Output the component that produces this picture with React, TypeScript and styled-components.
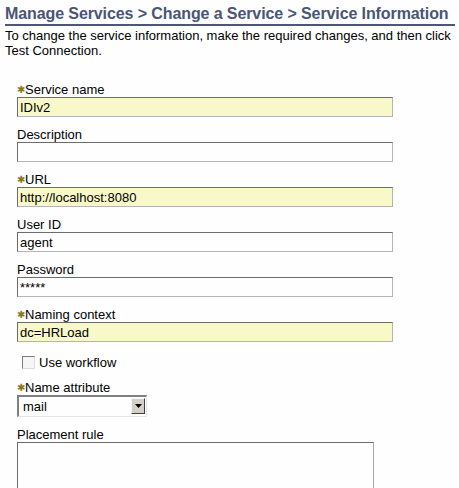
import React from "react";
import styled, { createGlobalStyle } from "styled-components";

const Global = createGlobalStyle`
  html, body { margin: 0; padding: 0; background: #fefefe; }
  body { font-family: "Liberation Sans", Arial, sans-serif; color: #000; }
`;

const Page = styled.div`
  padding: 0 4px 0 5px;
`;

const Title = styled.h1`
  margin: 0;
  padding: 4px 0 1px 0;
  font-size: 16px;
  line-height: 19px;
  font-weight: bold;
  letter-spacing: -0.1px;
  color: #4a5577;
  border-bottom: 2px solid #4b5679;
  white-space: nowrap;
`;

const Intro = styled.p`
  margin: 2px 0 0 0;
  font-size: 13px;
  line-height: 15px;
`;

const Form = styled.form`
  margin: 24px 0 0 12px;
  display: flex;
  flex-direction: column;
`;

const Label = styled.label`
  display: flex;
  align-items: center;
  height: 15px;
  font-size: 13px;
  line-height: 15px;
`;

const Req = styled.span`
  display: inline-block;
  width: 8px;
  font-family: "DejaVu Sans", sans-serif;
  font-size: 10px;
  line-height: 10px;
  color: #85791a;
  margin-top: 1px;
`;

const TextInput = styled.input<{ $required?: boolean }>`
  box-sizing: border-box;
  width: 376px;
  height: 20px;
  margin: 0 0 10px 0;
  padding: 0 2px;
  font-family: "Liberation Sans", Arial, sans-serif;
  font-size: 13px;
  color: #000;
  background: ${(p) => (p.$required ? "#f9f8c9" : "#fefefe")};
  border-style: solid;
  border-width: 1px;
  border-color: #6c6c6c #b4b4b8 #b4b4b8 #6c6c6c;
  outline: none;
`;

const CheckRow = styled.label`
  display: flex;
  align-items: center;
  gap: 4px;
  height: 15px;
  margin: 3px 0 10px 0;
  padding-left: 5px;
  font-size: 13px;
  line-height: 15px;
`;

const CheckBox = styled.input`
  appearance: none;
  box-sizing: border-box;
  width: 13px;
  height: 13px;
  margin: 0;
  background: #f6f6f6;
  border-style: solid;
  border-width: 1px;
  border-color: #7c7c7c #dcdcdc #dcdcdc #7c7c7c;
`;

const SelectWrap = styled.div`
  position: relative;
  width: 130px;
  height: 22px;
  margin-bottom: 10px;
`;

const Select = styled.select`
  appearance: none;
  box-sizing: border-box;
  width: 130px;
  height: 22px;
  margin: 0;
  padding: 0 0 0 4px;
  font-family: "Liberation Sans", Arial, sans-serif;
  font-size: 13px;
  color: #000;
  background: #fefefe;
  border-style: solid;
  border-width: 2px 1px 1px 2px;
  border-color: #808080 #e4e4e4 #e4e4e4 #808080;
  border-radius: 0;
  outline: none;
`;

const Arrow = styled.span`
  position: absolute;
  top: 3px;
  right: 2px;
  box-sizing: border-box;
  width: 14px;
  height: 16px;
  background: #d4d0c8;
  border-style: solid;
  border-width: 1px;
  border-color: #f4f4f4 #404040 #404040 #f4f4f4;
  display: flex;
  align-items: center;
  justify-content: center;
  pointer-events: none;
`;

const TextArea = styled.textarea`
  box-sizing: border-box;
  width: 357px;
  height: 70px;
  margin: 0;
  padding: 2px;
  resize: none;
  background: #fefefe;
  border-style: solid;
  border-width: 1px;
  border-color: #6c6c6c #a8a8ac #a8a8ac #6c6c6c;
  outline: none;
`;

type Field = { label: string; value: string; required?: boolean };

const fields: Field[] = [
  { label: "Service name", value: "IDIv2", required: true },
  { label: "Description", value: "" },
  { label: "URL", value: "http://localhost:8080", required: true },
  { label: "User ID", value: "agent" },
  { label: "Password", value: "*****" },
  { label: "Naming context", value: "dc=HRLoad", required: true },
];

export default function App() {
  return (
    <>
      <Global />
      <Page>
        <Title>Manage Services &gt; Change a Service &gt; Service Information</Title>
        <Intro>
          To change the service information, make the required changes, and then click Test
          Connection.
        </Intro>
        <Form onSubmit={(e) => e.preventDefault()}>
          {fields.map((f) => (
            <React.Fragment key={f.label}>
              <Label>
                {f.required && <Req>✱</Req>}
                {f.label}
              </Label>
              <TextInput $required={f.required} defaultValue={f.value} />
            </React.Fragment>
          ))}
          <CheckRow>
            <CheckBox type="checkbox" />
            Use workflow
          </CheckRow>
          <Label>
            <Req>✱</Req>
            Name attribute
          </Label>
          <SelectWrap>
            <Select defaultValue="mail">
              <option value="mail">mail</option>
              <option value="cn">cn</option>
              <option value="uid">uid</option>
            </Select>
            <Arrow>
              <svg width="7" height="4" viewBox="0 0 7 4">
                <path d="M0 0H7L3.5 4Z" fill="#000" />
              </svg>
            </Arrow>
          </SelectWrap>
          <Label>Placement rule</Label>
          <TextArea />
        </Form>
      </Page>
    </>
  );
}
